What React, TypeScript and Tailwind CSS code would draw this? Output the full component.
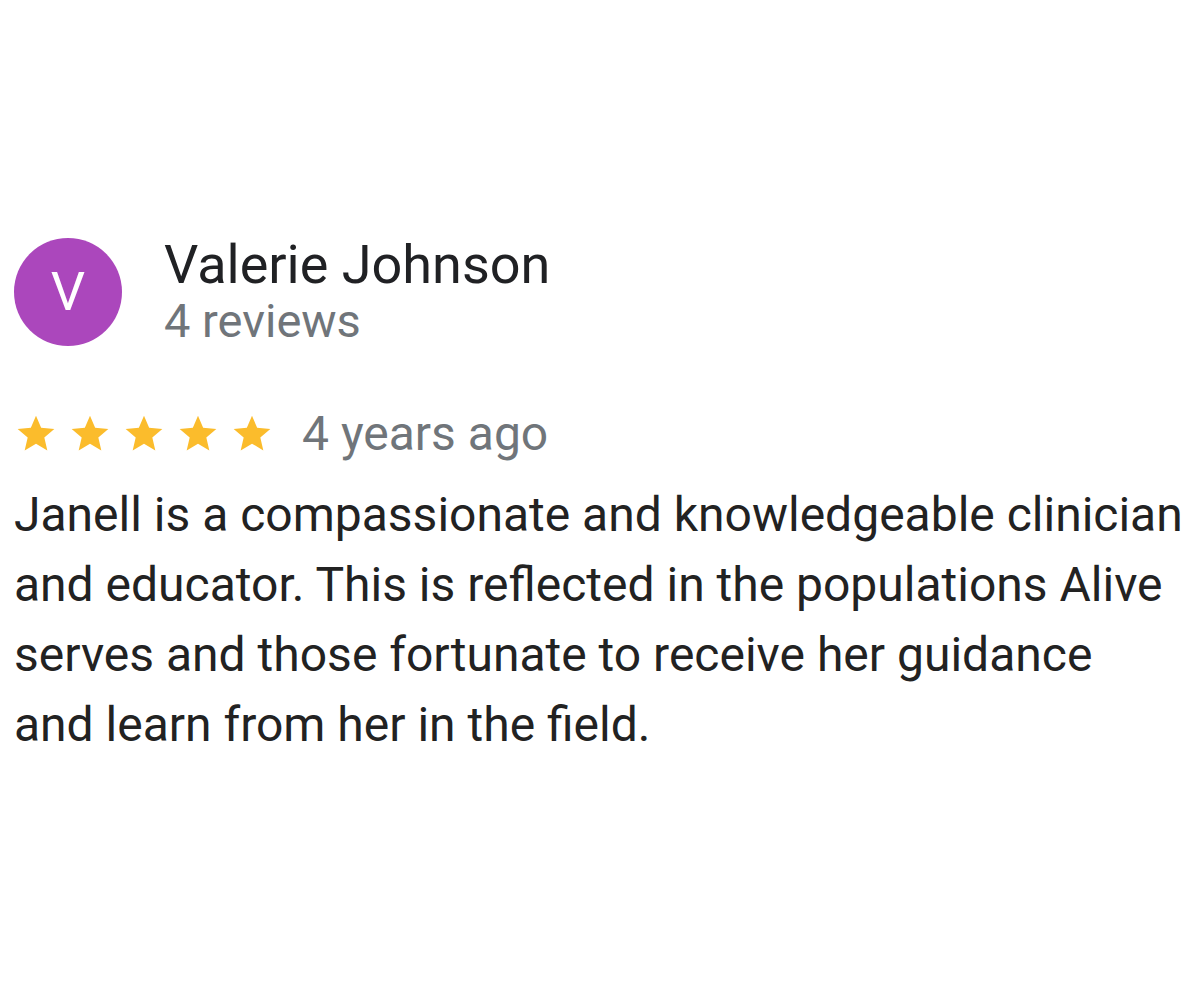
import React from 'react';

function Star() {
  return (
    <svg width="44" height="44" viewBox="0 0 24 24" className="shrink-0">
      <path
        d="M12 17.27 18.18 21l-1.64-7.03L22 9.24l-7.19-.61L12 2 9.19 8.63 2 9.24l5.46 4.73L5.82 21z"
        fill="#fbbc2c"
      />
    </svg>
  );
}

export default function App() {
  return (
    <div className="w-[1200px] h-[1000px] bg-white font-['Roboto',sans-serif] pt-[236px] pl-[14px]">
      {/* Header */}
      <div className="flex items-center gap-[42px]">
        <div className="w-[108px] h-[108px] rounded-full bg-[#ab47bc] flex items-center justify-center text-white text-[54px] leading-none">
          V
        </div>
        <div className="flex flex-col">
          <span className="text-[54px] leading-[58px] text-[#202124]">Valerie Johnson</span>
          <span className="text-[47px] leading-[54px] text-[#70757a]">4 reviews</span>
        </div>
      </div>

      {/* Rating */}
      <div className="flex items-center mt-[62px]">
        <div className="flex gap-[10px]">
          <Star />
          <Star />
          <Star />
          <Star />
          <Star />
        </div>
        <span className="ml-[28px] text-[48px] leading-none text-[#70757a]">4 years ago</span>
      </div>

      {/* Body */}
      <p className="mt-[22px] text-[48px] leading-[70px] text-[#222222] whitespace-nowrap">
        Janell is a compassionate and knowledgeable clinician
        <br />
        and educator. This is reflected in the populations Alive
        <br />
        serves and those fortunate to receive her guidance
        <br />
        and learn from her in the field.
      </p>
    </div>
  );
}
